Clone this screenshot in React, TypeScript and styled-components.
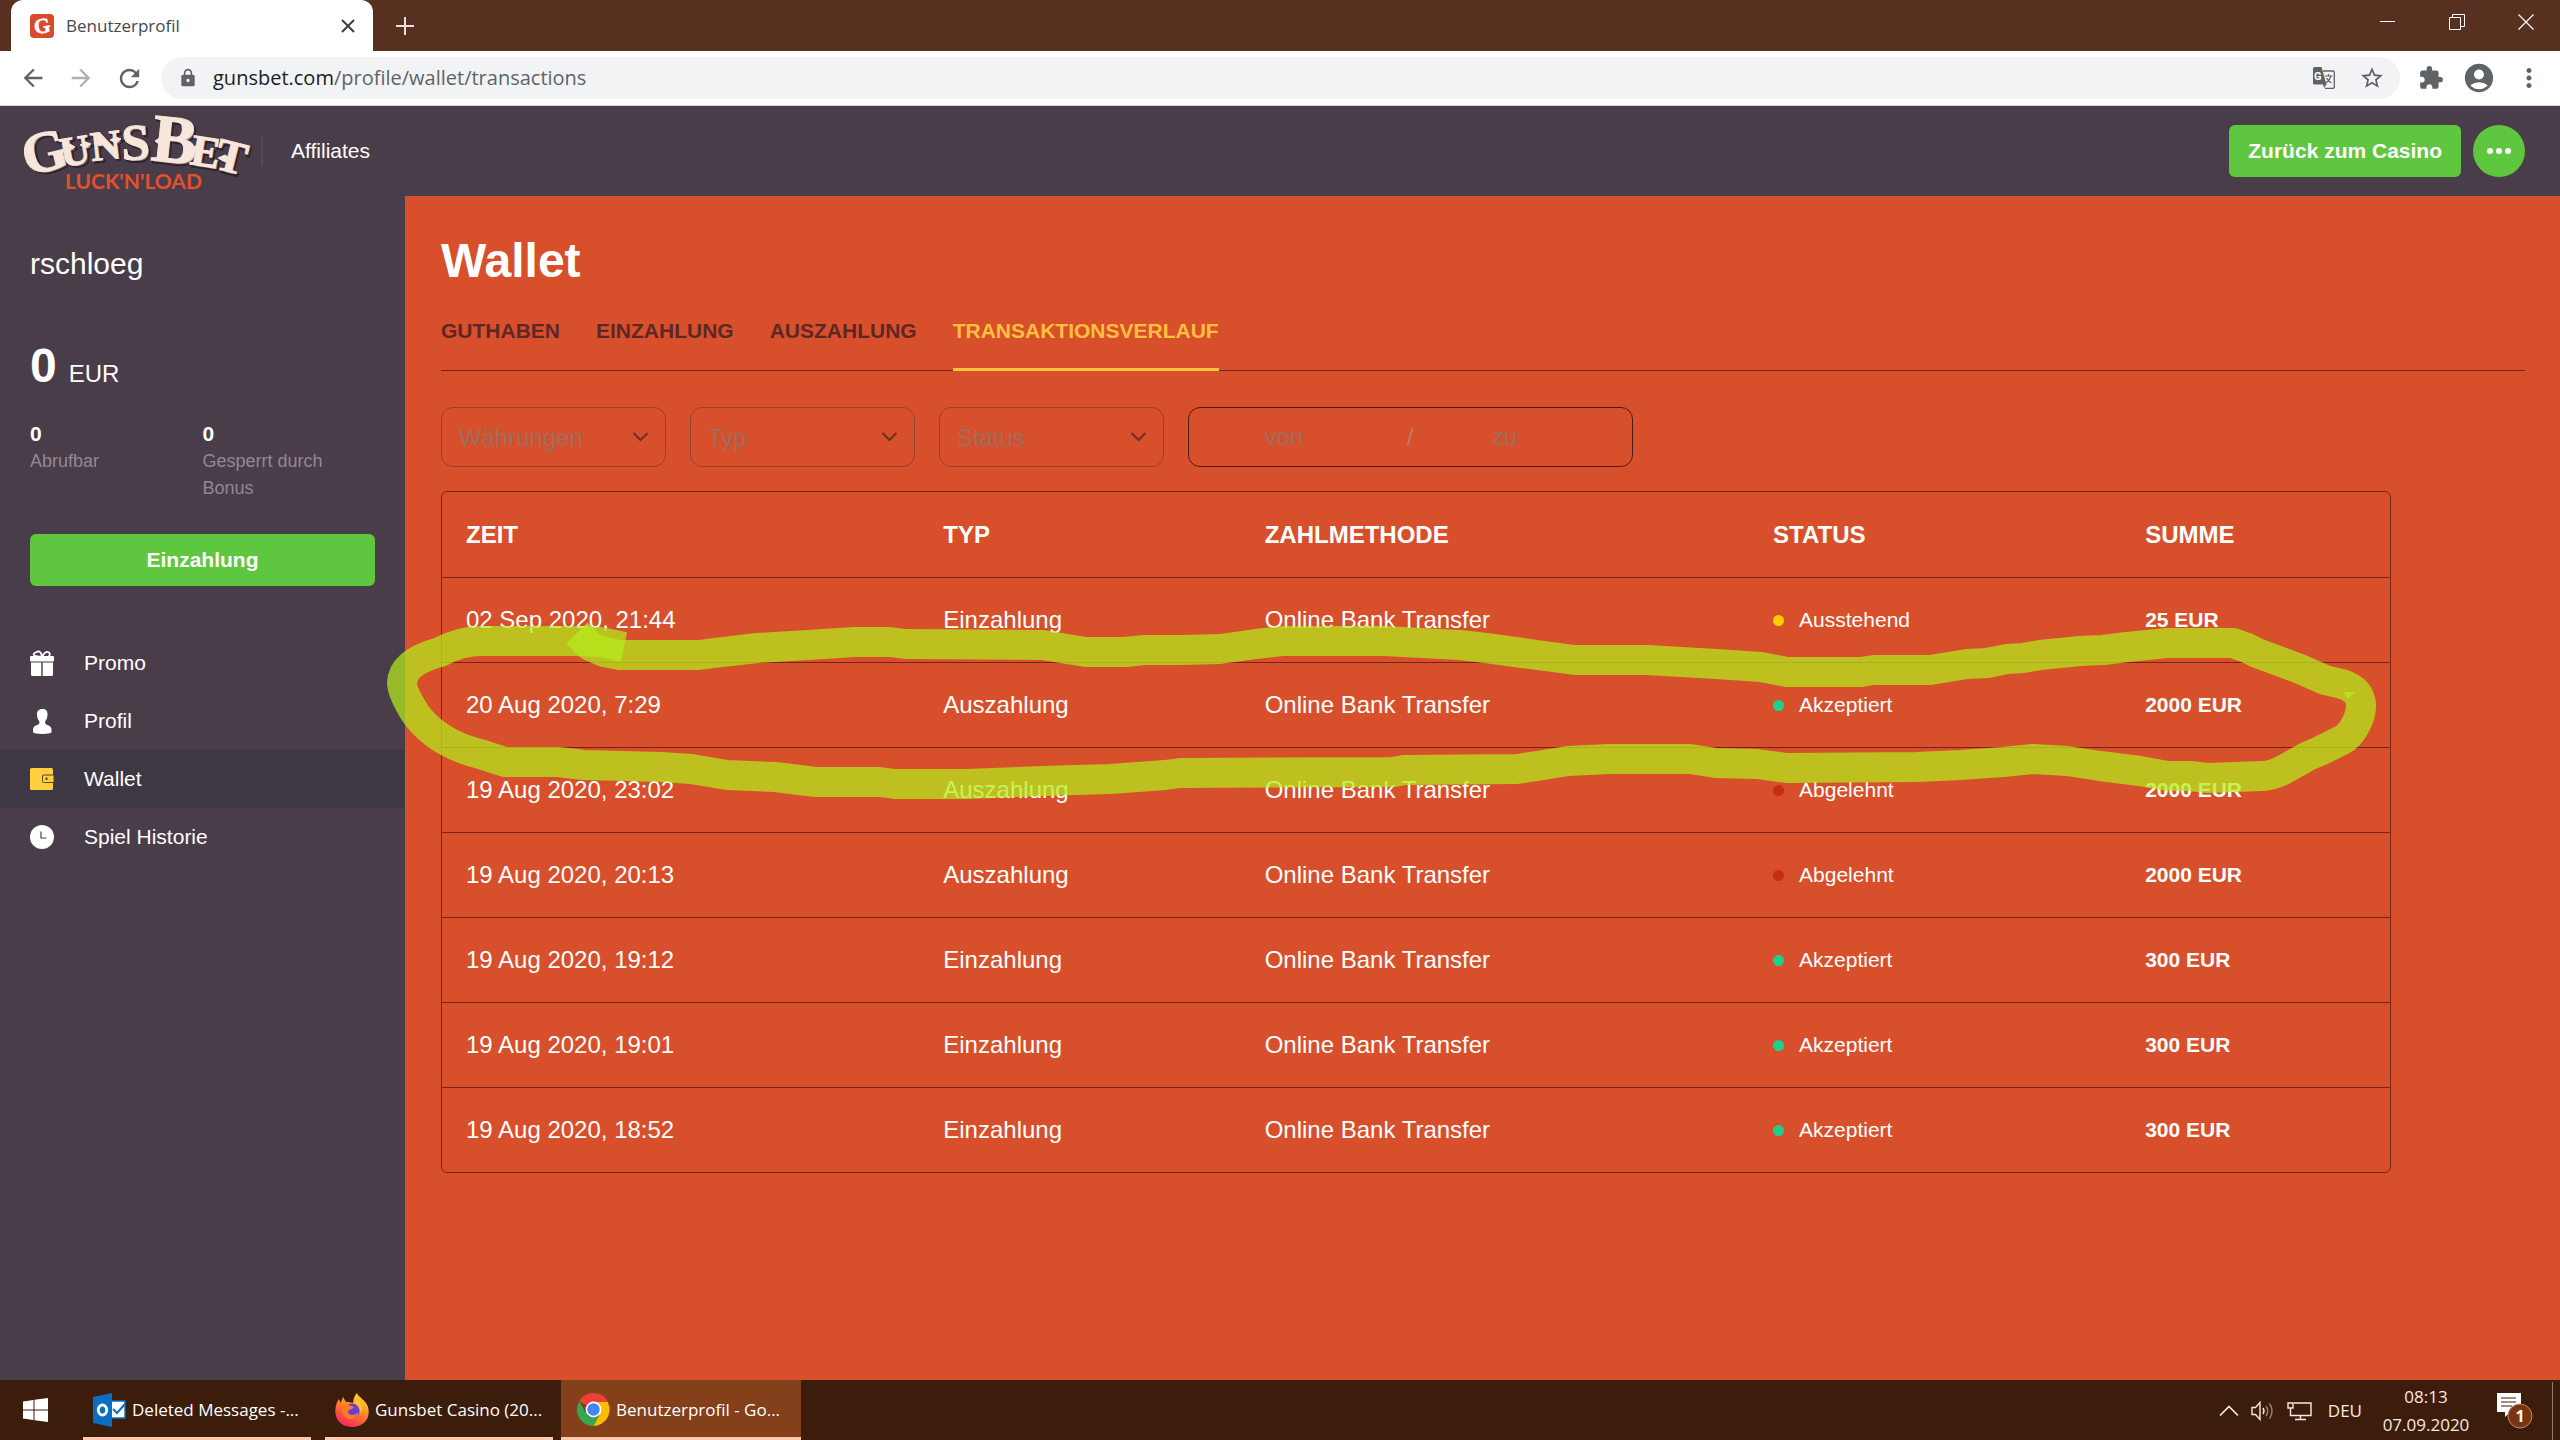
import React from "react";
import styled, { createGlobalStyle } from "styled-components";
import {
  MdAccountCircle,
  MdArrowBack,
  MdArrowForward,
  MdExtension,
  MdLock,
  MdMoreVert,
  MdRefresh,
  MdStarBorder,
} from "react-icons/md";

const site = '"Liberation Sans", Arial, sans-serif';
const system = '"Open Sans", "Noto Sans", sans-serif';

const color = {
  orange: "#d84f2b",
  purple: "#4a3d4a",
  purpleDark: "#3e3744",
  green: "#5fc63f",
  yellow: "#ffc03f",
  line: "#74251b",
  muted: "#928892",
  taskbar: "#3c1d0c",
};

const GlobalStyle = createGlobalStyle`
  * { box-sizing: border-box; }
  body { margin: 0; background: ${color.orange}; }
  button, input, select { font: inherit; color: inherit; margin: 0; }
  button { border: 0; padding: 0; background: none; cursor: pointer; }
  a { color: inherit; text-decoration: none; }
  svg { display: block; flex: none; overflow: visible; }
`;

const Screen = styled.div`
  position: relative;
  display: flex;
  flex-direction: column;
  min-height: 100vh;
  font-family: ${site};
  color: #fff;
`;

/* Browser window */

const TitleBar = styled.div`
  display: flex;
  height: 51px;
  padding-left: 11px;
  background: #57301f;
`;

const BrowserTab = styled.div`
  display: flex;
  align-items: center;
  gap: 12px;
  width: 362px;
  padding: 0 17px 0 19px;
  border-radius: 12px 12px 0 0;
  background: #fff;
  color: #45494d;
  font: 17px/24px ${system};
`;

const TabTitle = styled.span`
  flex: 1;
`;

const NewTab = styled.button`
  display: grid;
  place-items: center;
  width: 64px;
`;

const WindowControls = styled.div`
  display: flex;
  margin-left: auto;
  height: 43px;
`;

const WindowButton = styled.button`
  display: grid;
  place-items: center;
  width: 69px;
`;

const Toolbar = styled.div`
  display: flex;
  align-items: center;
  gap: 18px;
  height: 55px;
  padding: 0 16px 0 19px;
  border-bottom: 1px solid #d9d6da;
  background: #fff;
  color: #5f6368;
`;

const NavButtons = styled.div`
  display: flex;
  gap: 20px;
`;

const ToolButton = styled.button<{ $w: number; $dim?: boolean }>`
  display: grid;
  place-items: center;
  width: ${(p) => p.$w}px;
  opacity: ${(p) => (p.$dim ? 0.5 : 1)};
`;

const Omnibox = styled.div`
  display: flex;
  flex: 1;
  align-items: center;
  height: 42px;
  padding: 0 15px 0 17px;
  border-radius: 21px;
  background: #f1f3f4;
`;

const Url = styled.div`
  flex: 1;
  padding-left: 15px;
  font: 20px/28px ${system};
  b {
    font-weight: 400;
    color: #202124;
  }
`;

const OmniboxTools = styled.div`
  display: flex;
  align-items: center;
  gap: 24px;
`;

/* Site header */

const SiteHeader = styled.header`
  display: flex;
  align-items: center;
  height: 90px;
  padding: 0 35px 0 22px;
  background: ${color.purple};
`;

const HeaderDivider = styled.span`
  width: 2px;
  height: 30px;
  margin: 0 28px 0 13px;
  background: #574a57;
`;

const HeaderLink = styled.a`
  flex: 1;
  font-size: 21px;
`;

const GreenButton = styled.button<{ $wide?: boolean }>`
  height: 52px;
  width: ${(p) => (p.$wide ? "100%" : "auto")};
  padding: 0 19px;
  border-radius: 6px;
  background: ${color.green};
  font-size: 21px;
  font-weight: 700;
`;

const RoundButton = styled.button`
  display: grid;
  place-items: center;
  width: 52px;
  height: 52px;
  margin-left: 12px;
  border-radius: 50%;
  background: ${color.green};
`;

/* Sidebar */

const Body = styled.div`
  display: flex;
  flex: 1;
`;

const Sidebar = styled.aside`
  width: 405px;
  padding-top: 50px;
  background: ${color.purple};
`;

const Account = styled.section`
  padding: 0 30px;
`;

const UserName = styled.div`
  font-size: 30px;
  line-height: 36px;
`;

const Balance = styled.div`
  display: flex;
  align-items: baseline;
  gap: 12px;
  margin-top: 56px;
  font-size: 24px;
  line-height: 56px;
  strong {
    font-size: 48px;
  }
`;

const Stats = styled.dl`
  display: grid;
  grid-template-columns: 1fr 1fr;
  margin: 18px 0 32px;
  line-height: 27px;
`;

const Stat = styled.div`
  display: flex;
  flex-direction: column-reverse;
  justify-content: flex-end;
  dt {
    font-size: 18px;
    color: ${color.muted};
  }
  dd {
    margin: 0;
    font-size: 21px;
    font-weight: 700;
    line-height: 28px;
  }
`;

const Menu = styled.nav`
  margin-top: 48px;
`;

const MenuLink = styled.a<{ $active?: boolean }>`
  display: flex;
  align-items: center;
  gap: 30px;
  height: 58px;
  padding: 0 30px;
  background: ${(p) => (p.$active ? color.purpleDark : "transparent")};
  font-size: 21px;
`;

/* Wallet page */

const Main = styled.main`
  flex: 1;
  min-width: 0;
  padding: 37px 35px 60px 36px;
  background: ${color.orange};
`;

const Title = styled.h1`
  margin: 0;
  font-size: 48px;
  line-height: 56px;
`;

const Tabs = styled.nav`
  display: flex;
  gap: 36px;
  margin-top: 30px;
  box-shadow: inset 0 -1px ${color.line};
`;

const TabLink = styled.a<{ $active?: boolean }>`
  padding-bottom: 25px;
  border-bottom: 3px solid ${(p) => (p.$active ? color.yellow : "transparent")};
  color: ${(p) => (p.$active ? color.yellow : "#5e2725")};
  font-size: 21px;
  font-weight: 700;
  line-height: 24px;
`;

const Filters = styled.form`
  display: flex;
  gap: 24px;
  margin: 36px 0 24px;
  font-size: 24px;
  color: #9c6e5f;
`;

const HiddenText = styled.span`
  position: absolute;
  width: 1px;
  height: 1px;
  overflow: hidden;
  clip-path: inset(50%);
`;

const SelectBox = styled.label`
  display: grid;
  align-items: center;
  width: 225px;
  height: 60px;
  border: 1px solid #96402f;
  border-radius: 12px;
  select,
  svg {
    grid-area: 1 / 1;
  }
  svg {
    justify-self: end;
    margin-right: 16px;
    pointer-events: none;
  }
`;

const Select = styled.select`
  height: 100%;
  padding: 0 17px;
  border: 0;
  outline: 0;
  background: transparent;
  appearance: none;
`;

const DateRange = styled.div`
  display: flex;
  align-items: center;
  width: 445px;
  height: 60px;
  border: 1px solid #4f1a17;
  border-radius: 12px;
`;

const DateInput = styled.input`
  width: 190px;
  border: 0;
  outline: 0;
  background: transparent;
  text-align: center;
  &::placeholder {
    color: inherit;
    opacity: 1;
  }
`;

const DateSlash = styled.span`
  margin: 0 -4px 0 28px;
  color: #b77c6a;
`;

const Table = styled.table`
  width: 100%;
  max-width: 1950px;
  table-layout: fixed;
  border: 1px solid ${color.line};
  border-radius: 6px;
  border-spacing: 0;
  font-size: 24px;
  text-align: left;
  th,
  td {
    height: 85px;
    padding: 0 24px;
  }
  td {
    border-top: 1px solid ${color.line};
  }
`;

const Col = styled.col<{ $w: string }>`
  width: ${(p) => p.$w};
`;

const SmallCell = styled.td<{ $bold?: boolean }>`
  font-size: 21px;
  font-weight: ${(p) => (p.$bold ? 700 : 400)};
`;

const Status = styled.span<{ $tone: string }>`
  display: flex;
  align-items: center;
  gap: 15px;
  &::before {
    content: "";
    width: 11px;
    height: 11px;
    border-radius: 50%;
    background: ${(p) => p.$tone};
  }
`;

/* The marker drawn over the page */
const Marker = styled.svg`
  position: absolute;
  top: 0;
  left: 0;
  pointer-events: none;
`;

/* Windows taskbar */

const Taskbar = styled.footer`
  display: flex;
  height: 60px;
  background: ${color.taskbar};
  font: 17px/24px ${system};
`;

const StartButton = styled.button`
  display: grid;
  place-items: center;
  width: 71px;
`;

const TaskList = styled.div`
  display: flex;
  gap: 14px;
  padding-left: 12px;
`;

const Task = styled.button<{ $active?: boolean }>`
  display: flex;
  align-items: center;
  gap: 6px;
  width: ${(p) => (p.$active ? 240 : 228)}px;
  margin-left: ${(p) => (p.$active ? -6 : 0)}px;
  padding: 2px 0 0 ${(p) => (p.$active ? 16 : 10)}px;
  border-bottom: 3px solid #ffc9ad;
  background: ${(p) => (p.$active ? "#843f1b" : "transparent")};
  white-space: nowrap;
`;

const Tray = styled.div`
  display: flex;
  align-items: center;
  gap: 16px;
  margin-left: auto;
  padding-top: 2px;
  color: #fbe9df;
`;

const TrayIcons = styled.div`
  display: flex;
  align-items: center;
  gap: 12px;
`;

const Clock = styled.div`
  width: 96px;
  margin-right: 6px;
  line-height: 28px;
  text-align: center;
`;

const ShowDesktop = styled.span`
  align-self: stretch;
  width: 8px;
  margin-left: 0;
  border-left: 1px solid #907b70;
`;

const letters = [
  { c: "G", x: 27, y: 176, s: 58, r: -14 },
  { c: "U", x: 62, y: 167, s: 42, r: -9 },
  { c: "N", x: 92, y: 161, s: 42, r: -6 },
  { c: "S", x: 122, y: 160, s: 51, r: -2 },
  { c: "B", x: 150, y: 160, s: 68, r: 6 },
  { c: "E", x: 189, y: 164, s: 44, r: 9 },
  { c: "T", x: 213, y: 168, s: 46, r: 14 },
];

const LogoWord = ({ shift }: { shift: number }) => (
  <>
    {letters.map((l) => (
      <text key={l.c} x={l.x + shift} y={l.y + shift} fontSize={l.s} transform={`rotate(${l.r} ${l.x} ${l.y})`}>
        {l.c}
      </text>
    ))}
    <path
      transform={`translate(${shift} ${shift})`}
      d="M64 148l6-4 5 3-5 3zM80 145l6-3 5 2-5 4zM94 143l6-4 5 3-5 4zM110 140l6-3 5 2-5 4zM155 141l6-4 4 4-5 4zM191 149l6-4 4 4-4 4zM218 158l7-3 6 4-6 3z"
    />
  </>
);

const GunsBetLogo = () => (
  <svg width="226" height="84" viewBox="22 109 226 84" role="img" aria-label="GunsBet Luck'n'Load">
    <g fontFamily='"Liberation Serif", serif' fontWeight="700">
      <g fill="#a9796a" stroke="#2f2530" strokeWidth="2">
        <LogoWord shift={2} />
      </g>
      <g fill="#f6e6dc" stroke="#f6e6dc" strokeWidth="1">
        <LogoWord shift={0} />
      </g>
    </g>
    <text x="65" y="189" fontFamily="Lato, sans-serif" fontWeight="700" fontSize="21" fill="#e2502d">
      LUCK'N'LOAD
    </text>
  </svg>
);

const Favicon = () => (
  <svg width="24" height="24" viewBox="0 0 24 24">
    <rect width="24" height="24" rx="4" fill="#d9492b" />
    <text
      x="12"
      y="19"
      textAnchor="middle"
      fontFamily='"Liberation Serif", serif'
      fontWeight="700"
      fontSize="21"
      fill="#fff"
      stroke="#fff"
      strokeWidth="0.600"
      transform="rotate(-8 12 12)"
    >
      G
    </text>
  </svg>
);

const TranslateIcon = () => (
  <svg width="22" height="22" viewBox="0 0 22 22">
    <path d="M10 4h10q1.300 0 1.300 1.300V20q0 1.300-1.300 1.300H12" fill="none" stroke="#5f6368" strokeWidth="1.300" />
    <path d="M1.500 0h7l5 17.500H1.500Q0 17.500 0 16V1.500Q0 0 1.500 0zM10 17.500h3.500L11 21z" fill="#5f6368" />
    <text x="1" y="13" fontFamily="Roboto, sans-serif" fontWeight="700" fontSize="11" fill="#fff">
      G
    </text>
    <path d="M12 9h7.500M15.500 7v2M18 9q-1 4-5 7M13.500 11q1.500 3 5 5" fill="none" stroke="#5f6368" strokeWidth="1.200" />
  </svg>
);

const Chevron = () => (
  <svg width="17" height="10" viewBox="0 0 17 10" fill="none" stroke="#6b3028" strokeWidth="2">
    <path d="M1.500 1l7 7 7-7" />
  </svg>
);

const GiftIcon = () => (
  <svg width="24" height="25" viewBox="0 0 24 25" fill="#fff">
    <rect y="5" width="24" height="5.500" rx="1" />
    <path d="M1 11.500h10.300V25H2.500Q1 25 1 23.500zM12.700 11.500H23v12Q23 25 21.500 25h-8.800z" />
    <path d="M12 5.500Q7 6 4.500 4.500T6.500 1 12 5.500Q15.500 0 18 1t1.500 3.500T12 5.500z" fill="none" stroke="#fff" strokeWidth="1.800" />
  </svg>
);

const PersonIcon = () => (
  <svg width="24" height="25" viewBox="0 0 24 25" fill="#fff">
    <path d="M12.500 0c3.500 0 5 2 5 5 0 3-.6 5.500-2.300 7.200-.4 2.300.3 3.300 2.300 3.800 2.500.7 4 2 4 5v2.300Q20 25 12.300 25T3 23.300V21c0-3 1.500-4.300 4-5 2-.5 2.700-1.500 2.300-3.800C7.600 10.500 7 8 7 5c0-3 2-5 5.500-5z" />
  </svg>
);

const WalletIcon = () => (
  <svg width="24" height="22" viewBox="0 0 24 22">
    <rect width="23" height="22" rx="1.500" fill="#ffcf3f" />
    <path d="M24 7H13.500Q12.500 7 12.500 8v5.500q0 1 1 1H24z" fill="#ffcf3f" stroke="#5a4424" strokeWidth="1" />
    <circle cx="16.500" cy="10.800" r="1.200" fill="#5a4424" />
  </svg>
);

const ClockIcon = () => (
  <svg width="24" height="24" viewBox="0 0 24 24">
    <circle cx="12" cy="12" r="12" fill="#fff" />
    <path d="M11 6.500v6.500h5.500" fill="none" stroke="#4a3d4a" strokeWidth="1.200" />
  </svg>
);

const OutlookIcon = () => (
  <svg width="33" height="34" viewBox="0 0 33 34">
    <rect x="17" y="8" width="15" height="17" fill="#fff" stroke="#0a6fc2" strokeWidth="1.500" />
    <path d="M20 16l4 4 8-9" fill="none" stroke="#0a6fc2" strokeWidth="2" />
    <path d="M0 4L19 0v34L0 30z" fill="#0a6fc2" />
    <ellipse cx="9.500" cy="17" rx="4.200" ry="5" fill="none" stroke="#fff" strokeWidth="2.800" />
  </svg>
);

const FirefoxIcon = () => (
  <svg width="34" height="34" viewBox="0 0 34 34">
    <defs>
      <linearGradient id="fox" x1="0.800" y1="0" x2="0.300" y2="1">
        <stop offset="0" stopColor="#ffe23c" />
        <stop offset="0.450" stopColor="#ff8a1e" />
        <stop offset="1" stopColor="#f5235f" />
      </linearGradient>
    </defs>
    <path d="M22 0c1 4 9 7 11 14 3 11-4 20-16 20S-1 25 .5 15C1 11 2.500 8 4 6l1.500 4L8 4l3 5c2 0 5 0 7 1 0-4 2-8 4-10z" fill="url(#fox)" />
    <circle cx="17" cy="18" r="7.500" fill="#6a3fd0" />
    <path d="M9 12c4-1 6 1 10 2-2 3-6 2-6 5 1 4 8 4 10 0 1 8-12 10-15 2-1-3-1-6 1-9z" fill="#ff7a28" />
    <path d="M18 10c5 1 8 5 7 11 3-4 3-11-3-15-1 2-2 3-4 4z" fill="#ffc431" />
  </svg>
);

const ChromeIcon = () => (
  <svg width="33" height="33" viewBox="0 0 48 48">
    <path d="M24 24L3.200 12A24 24 0 0 1 44.800 12z" fill="#ea4335" />
    <path d="M24 13h20.800a24 24 0 0 1-20.800 35l9.500-18.500z" fill="#fbbc05" />
    <path d="M3.200 12l10.400 18a12 12 0 0 0 19 2L24 48A24 24 0 0 1 3.200 12z" fill="#34a853" />
    <circle cx="24" cy="24" r="11.500" fill="#fff" />
    <circle cx="24" cy="24" r="9" fill="#4285f4" />
  </svg>
);

const SpeakerIcon = () => (
  <svg width="24" height="20" viewBox="0 0 24 20" fill="none" stroke="currentColor" strokeWidth="1.400">
    <path d="M1 6.500h3.500L9 1.500v17l-4.500-5H1z" />
    <path d="M12 7q2 3 0 6" />
    <path d="M15 5q3.500 5 0 10M18.500 2.500q5 7.500 0 15" opacity="0.500" />
  </svg>
);

const MonitorIcon = () => (
  <svg width="25" height="19" viewBox="0 0 25 19" fill="none" stroke="currentColor" strokeWidth="1.400">
    <path d="M7 1h17v12.500H3.500V8M13.500 13.500V17M8 17.500h11M1 1h5v5H1zM3.500 6v3" />
  </svg>
);

const NoticeIcon = () => (
  <svg width="40" height="38" viewBox="0 0 40 38">
    <path d="M1 1h24v19H14l-5 5v-5H1z" fill="#fff" />
    <path d="M5 6h15M5 10h15M5 14h11" stroke={color.taskbar} strokeWidth="1.200" />
    <circle cx="24" cy="24" r="12" fill="#7c3410" stroke="#b98a70" strokeWidth="1" />
    <text x="24" y="30" textAnchor="middle" fontFamily={system} fontSize="16" fontWeight="700" fill="#fff">
      1
    </text>
  </svg>
);

const tones: Record<string, string> = {
  Ausstehend: "#ffcc00",
  Akzeptiert: "#1fd08c",
  Abgelehnt: "#c62d17",
};

const rows = [
  ["02 Sep 2020, 21:44", "Einzahlung", "Ausstehend", "25 EUR"],
  ["20 Aug 2020, 7:29", "Auszahlung", "Akzeptiert", "2000 EUR"],
  ["19 Aug 2020, 23:02", "Auszahlung", "Abgelehnt", "2000 EUR"],
  ["19 Aug 2020, 20:13", "Auszahlung", "Abgelehnt", "2000 EUR"],
  ["19 Aug 2020, 19:12", "Einzahlung", "Akzeptiert", "300 EUR"],
  ["19 Aug 2020, 19:01", "Einzahlung", "Akzeptiert", "300 EUR"],
  ["19 Aug 2020, 18:52", "Einzahlung", "Akzeptiert", "300 EUR"],
];

const upperStroke =
  "M577 633L590 646L604 652L620 655H699L714 653L757 648L808 645L854 642H890L905 644L1043 645L1061 648L1086 652H1125L1145 650H1180L1220 649L1256 644L1282 641H1384L1460 645L1486 648L1537 655L1575 660H1647L1716 664L1761 667L1787 672H1861L1874 670H1930L1967 664L1987 663L2007 659L2023 658L2040 655L2080 651L2103 650L2127 647L2167 643H2233L2247 648L2257 653L2300 669L2325 680L2342 684Q2361 690 2361 706";
const lowerStroke =
  "M2361 706Q2361 715 2356 724Q2350 736 2342 740L2320 751L2308 756L2285 769Q2272 776 2262 776L2208 778L2190 776L2167 776L2140 771L2100 766L2067 761L2033 759L2003 762L1960 765L1917 767L1787 768L1757 764L1716 763L1690 759H1609L1568 761L1537 766L1517 769L1404 770L1394 772L1180 773L1165 775L1110 779L1043 781L967 784H895L880 782H816L775 777L727 775L691 769L661 767L584 765L558 762H505L480 754Q436 743 415 713Q402 692 402 683Q403 662 440 652Q460 641 482 641H574L600 642L624 647";

const menu = [
  { label: "Promo", icon: <GiftIcon /> },
  { label: "Profil", icon: <PersonIcon /> },
  { label: "Wallet", icon: <WalletIcon />, active: true },
  { label: "Spiel Historie", icon: <ClockIcon /> },
];

const BrowserChrome = () => (
  <>
    <TitleBar>
      <BrowserTab>
        <Favicon />
        <TabTitle>Benutzerprofil</TabTitle>
        <button aria-label="Tab schließen">
          <svg width="16" height="16" viewBox="0 0 16 16" stroke="#3c4043" strokeWidth="2">
            <path d="M2 2l12 12M14 2L2 14" />
          </svg>
        </button>
      </BrowserTab>
      <NewTab aria-label="Neuer Tab">
        <svg width="18" height="18" viewBox="0 0 18 18" stroke="#eadfda" strokeWidth="2">
          <path d="M9 0v18M0 9h18" />
        </svg>
      </NewTab>
      <WindowControls>
        <WindowButton aria-label="Minimieren">
          <svg width="16" height="16" viewBox="0 0 16 16" stroke="#fff">
            <path d="M0 7.500h15" />
          </svg>
        </WindowButton>
        <WindowButton aria-label="Verkleinern">
          <svg width="16" height="16" viewBox="0 0 16 16" stroke="#fff" fill="none">
            <path d="M.5 3.500h11v12H.5zM3.500 3.500v-3h12v12h-3.500" />
          </svg>
        </WindowButton>
        <WindowButton aria-label="Schließen">
          <svg width="16" height="16" viewBox="0 0 16 16" stroke="#fff" strokeWidth="1.200">
            <path d="M.5.5l15 15M15.500.5l-15 15" />
          </svg>
        </WindowButton>
      </WindowControls>
    </TitleBar>
    <Toolbar>
      <NavButtons>
        <ToolButton $w={28} aria-label="Zurück">
          <MdArrowBack size={28} />
        </ToolButton>
        <ToolButton $w={28} $dim aria-label="Vorwärts">
          <MdArrowForward size={28} />
        </ToolButton>
        <ToolButton $w={28} aria-label="Neu laden">
          <MdRefresh size={29} />
        </ToolButton>
      </NavButtons>
      <Omnibox>
        <MdLock size={20} />
        <Url>
          <b>gunsbet.com</b>/profile/wallet/transactions
        </Url>
        <OmniboxTools>
          <ToolButton $w={22} aria-label="Übersetzen">
            <TranslateIcon />
          </ToolButton>
          <ToolButton $w={26} aria-label="Lesezeichen">
            <MdStarBorder size={26} />
          </ToolButton>
        </OmniboxTools>
      </Omnibox>
      <ToolButton $w={26} aria-label="Erweiterungen">
        <MdExtension size={26} />
      </ToolButton>
      <ToolButton $w={34} aria-label="Konto">
        <MdAccountCircle size={34} />
      </ToolButton>
      <ToolButton $w={30} aria-label="Menü">
        <MdMoreVert size={30} />
      </ToolButton>
    </Toolbar>
  </>
);

const FilterSelect = ({ label }: { label: string }) => (
  <SelectBox>
    <HiddenText>{label}</HiddenText>
    <Select aria-label={label} defaultValue="">
      <option value="">{label}</option>
    </Select>
    <Chevron />
  </SelectBox>
);

const Transactions = () => (
  <Table>
    <colgroup>
      <Col $w="24.5%" />
      <Col $w="16.5%" />
      <Col $w="26.1%" />
      <Col $w="19.1%" />
      <Col $w="13.8%" />
    </colgroup>
    <thead>
      <tr>
        <th>ZEIT</th>
        <th>TYP</th>
        <th>ZAHLMETHODE</th>
        <th>STATUS</th>
        <th>SUMME</th>
      </tr>
    </thead>
    <tbody>
      {rows.map(([time, type, status, sum]) => (
        <tr key={time}>
          <td>{time}</td>
          <td>{type}</td>
          <td>Online Bank Transfer</td>
          <SmallCell>
            <Status $tone={tones[status]}>{status}</Status>
          </SmallCell>
          <SmallCell $bold>{sum}</SmallCell>
        </tr>
      ))}
    </tbody>
  </Table>
);

export default function App() {
  return (
    <Screen>
      <GlobalStyle />
      <BrowserChrome />
      <SiteHeader>
        <a href="#home">
          <GunsBetLogo />
        </a>
        <HeaderDivider />
        <HeaderLink href="#affiliates">Affiliates</HeaderLink>
        <GreenButton>Zurück zum Casino</GreenButton>
        <RoundButton aria-label="Mehr">
          <svg width="24" height="6" viewBox="0 0 24 6" fill="#fff">
            <circle cx="3" cy="3" r="3" />
            <circle cx="12" cy="3" r="3" />
            <circle cx="21" cy="3" r="3" />
          </svg>
        </RoundButton>
      </SiteHeader>
      <Body>
        <Sidebar>
          <Account>
            <UserName>rschloeg</UserName>
            <Balance>
              <strong>0</strong> EUR
            </Balance>
            <Stats>
              <Stat>
                <dt>Abrufbar</dt>
                <dd>0</dd>
              </Stat>
              <Stat>
                <dt>Gesperrt durch Bonus</dt>
                <dd>0</dd>
              </Stat>
            </Stats>
            <GreenButton $wide>Einzahlung</GreenButton>
          </Account>
          <Menu>
            {menu.map((m) => (
              <MenuLink key={m.label} href={`#${m.label}`} $active={m.active}>
                {m.icon}
                {m.label}
              </MenuLink>
            ))}
          </Menu>
        </Sidebar>
        <Main>
          <Title>Wallet</Title>
          <Tabs>
            <TabLink href="#guthaben">GUTHABEN</TabLink>
            <TabLink href="#einzahlung">EINZAHLUNG</TabLink>
            <TabLink href="#auszahlung">AUSZAHLUNG</TabLink>
            <TabLink href="#verlauf" $active>
              TRANSAKTIONSVERLAUF
            </TabLink>
          </Tabs>
          <Filters>
            <FilterSelect label="Währungen" />
            <FilterSelect label="Typ" />
            <FilterSelect label="Status" />
            <DateRange>
              <DateInput placeholder="von" aria-label="von" />
              <DateSlash>/</DateSlash>
              <DateInput placeholder="zu" aria-label="zu" />
            </DateRange>
          </Filters>
          <Transactions />
        </Main>
      </Body>
      <Taskbar>
        <StartButton aria-label="Start">
          <svg width="25" height="24" viewBox="0 0 25 24" fill="#fff">
            <path d="M0 3.500L10.500 2v9.500H0zM11.500 1.800L25 0v11.500H11.500zM0 12.500h10.500V22L0 20.500zM11.500 12.500H25V24l-13.500-1.800z" />
          </svg>
        </StartButton>
        <TaskList>
          <Task>
            <OutlookIcon />
            Deleted Messages -...
          </Task>
          <Task>
            <FirefoxIcon />
            Gunsbet Casino (20...
          </Task>
          <Task $active>
            <ChromeIcon />
            Benutzerprofil - Go...
          </Task>
        </TaskList>
        <Tray>
          <TrayIcons>
            <svg width="20" height="12" viewBox="0 0 20 12" fill="none" stroke="currentColor" strokeWidth="1.600">
              <path d="M1 10.500l9-9 9 9" />
            </svg>
            <SpeakerIcon />
            <MonitorIcon />
          </TrayIcons>
          <span>DEU</span>
          <Clock>
            08:13
            <br />
            07.09.2020
          </Clock>
          <NoticeIcon />
          <ShowDesktop />
        </Tray>
      </Taskbar>
      <Marker width="2560" height="1440" viewBox="0 0 2560 1440" fill="none" stroke="#b4ea1c" strokeOpacity="0.730" strokeWidth="30" strokeLinejoin="round">
        <path d={upperStroke} />
        <path d={lowerStroke} />
        <path d="M2343 692l12 0-7 7z" fill="#b4ea1c" fillOpacity="0.730" stroke="none" />
      </Marker>
    </Screen>
  );
}
